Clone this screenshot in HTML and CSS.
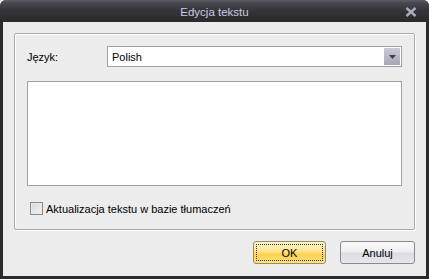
FILE: index.html
```html
<!DOCTYPE html>
<html>
<head>
<meta charset="utf-8">
<link rel="stylesheet" href="styles.css">
</head>
<body>
<div class="window">
  <div class="titlebar">
    <span class="title">Edycja tekstu</span>
    <span class="close">
      <svg width="12" height="10" viewBox="0 0 12 10"><path d="M1.5 1 L10.5 9 M10.5 1 L1.5 9" stroke="#a8acb8" stroke-width="2.4" fill="none"/></svg>
    </span>
  </div>
  <div class="body">
    <div class="group">
      <div class="row">
        <span class="label">Język:</span>
        <div class="combo">
          <span class="combo-text">Polish</span>
          <span class="combo-btn">
            <svg width="7" height="4" viewBox="0 0 7 4"><path d="M0 0 H7 L3.5 4 Z" fill="#404048"/></svg>
          </span>
        </div>
      </div>
      <div class="memo"></div>
      <label class="check-row">
        <span class="checkbox"></span>
        <span class="check-label">Aktualizacja tekstu w bazie tłumaczeń</span>
      </label>
    </div>
    <div class="buttons">
      <button class="btn ok"><span class="focus">OK</span></button>
      <button class="btn">Anuluj</button>
    </div>
  </div>
</div>
</body>
</html>
```
FILE: styles.css
```css
html, body {
  margin: 0;
  padding: 0;
  background: #ffffff;
}
.window {
  width: 429px;
  height: 279px;
  box-sizing: border-box;
  background: #2a2a2c;
  border-radius: 6px 6px 0 0;
  display: flex;
  flex-direction: column;
  font-family: "Liberation Sans", Arial, sans-serif;
  font-size: 11px;
  color: #000;
  overflow: hidden;
}
.titlebar {
  height: 22px;
  flex: none;
  display: flex;
  align-items: center;
  justify-content: center;
  position: relative;
  background: linear-gradient(#5c5c64 0px, #47474e 3px, #35353a 10px, #2a2a2c 22px);
}
.title {
  color: #c8cce0;
  font-size: 11.5px;
  margin-top: 1px;
}
.close {
  position: absolute;
  right: 12px;
  top: 7px;
  line-height: 0;
}
.body {
  flex: 1;
  margin: 0 3px 3px 3px;
  background: #ececec;
  padding: 11px 11px 0 11px;
  display: flex;
  flex-direction: column;
}
.group {
  height: 197px;
  box-sizing: border-box;
  border: 1px solid #a8a8a8;
  box-shadow: inset 1px 1px 0 #ffffff, 1px 1px 0 #ffffff;
  border-radius: 2px;
  padding: 12px 12px 0 12px;
  display: flex;
  flex-direction: column;
}
.row {
  display: flex;
  align-items: center;
  height: 21px;
}
.label {
  width: 80px;
  font-size: 11px;
}
.combo {
  flex: 1;
  height: 21px;
  box-sizing: border-box;
  border: 1px solid #a0a0a0;
  background: #fff;
  display: flex;
  align-items: center;
  padding: 1px;
}
.combo-text {
  flex: 1;
  padding-left: 3px;
  font-size: 11px;
}
.combo-btn {
  width: 16px;
  height: 17px;
  background: linear-gradient(#c8ccd8, #a4a8b6);
  display: flex;
  align-items: center;
  justify-content: center;
}
.memo {
  margin-top: 14px;
  height: 105px;
  box-sizing: border-box;
  border: 1px solid #a0a0a0;
  background: #fff;
}
.check-row {
  display: flex;
  align-items: center;
  margin-top: 16px;
  padding-left: 3px;
}
.checkbox {
  width: 11px;
  height: 11px;
  border: 1px solid #8a8a8a;
  background: linear-gradient(135deg, #d8d8d8, #f4f4f4);
  box-shadow: inset 0 0 0 1px #e8e8e8;
  margin-right: 3px;
}
.check-label {
  font-size: 11px;
}
.buttons {
  display: flex;
  justify-content: flex-end;
  gap: 14px;
  margin-top: 11px;
}
.btn {
  height: 23px;
  width: 75px;
  box-sizing: border-box;
  border: 1px solid #8a8a8e;
  border-radius: 3px;
  background: linear-gradient(#fbfbfb 0%, #eeeef0 45%, #dcdde2 55%, #e6e7ec 100%);
  font-family: "Liberation Sans", Arial, sans-serif;
  font-size: 11px;
  color: #000;
  padding: 0;
  display: flex;
  align-items: center;
  justify-content: center;
}
.btn.ok {
  width: 73px;
  border-color: #9a8a60;
  background: linear-gradient(#fff6d0 0%, #ffe48a 45%, #ffd24a 60%, #ffe27a 100%);
  padding: 2px;
}
.focus {
  flex: 1;
  align-self: stretch;
  border: 1px dotted #333;
  display: flex;
  align-items: center;
  justify-content: center;
}
```
